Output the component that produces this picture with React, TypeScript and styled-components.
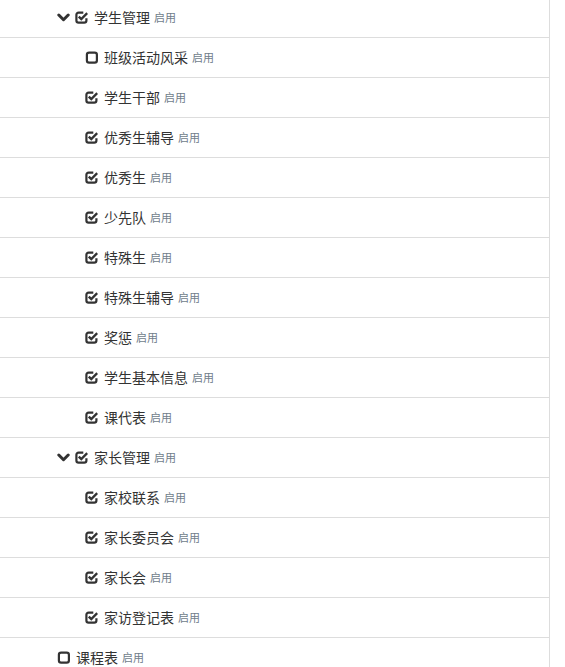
import React from "react";
import styled, { createGlobalStyle } from "styled-components";

const GlobalStyle = createGlobalStyle`
  html, body { margin: 0; padding: 0; background: #fff; }
  body { font-family: "Helvetica Neue", "Liberation Sans", "Noto Sans CJK SC", sans-serif; color: #333; }
`;

const Tree = styled.ul`
  list-style: none;
  margin: -2px 0 0 0;
  padding: 0;
  width: 550px;
  box-sizing: border-box;
  border-right: 1px solid #ddd;
`;

const Row = styled.li<{ $indent: number }>`
  display: flex;
  align-items: center;
  height: 40px;
  box-sizing: border-box;
  padding-left: ${(p) => p.$indent}px;
  border-bottom: 1px solid #ddd;
`;

const IconBox = styled.span<{ $gap: number }>`
  display: inline-flex;
  width: 13px;
  height: 13px;
  margin-right: ${(p) => p.$gap}px;
  color: #333;
  svg { display: block; }
`;

const Label = styled.span`
  font-family: "Noto Sans CJK SC", "Liberation Sans", sans-serif;
  font-size: 14px;
  color: #333;
  line-height: 20px;
  margin-bottom: 2px;
`;

const Status = styled.span`
  font-family: "Noto Sans CJK SC", "Liberation Sans", sans-serif;
  font-size: 11px;
  color: #6f7d8a;
  margin-left: 4px;
  line-height: 20px;
  margin-bottom: 2px;
`;

const Chevron = () => (
  <IconBox $gap={5}>
    <svg width="13" height="13" viewBox="0 0 13 13">
      <polyline points="1.8,4 6.5,8.7 11.2,4" fill="none" stroke="#333" strokeWidth="3" strokeLinecap="round" strokeLinejoin="round" />
    </svg>
  </IconBox>
);

const CheckSquare = () => (
  <IconBox $gap={6}>
    <svg width="13" height="13" viewBox="0 0 13 13">
      <path d="M8.3 1.6 H3.6 A2.2 2.2 0 0 0 1.4 3.8 V9.4 A2.2 2.2 0 0 0 3.6 11.6 H9.2 A2.2 2.2 0 0 0 11.4 9.4 V7.3" fill="none" stroke="#333" strokeWidth="2.2" />
      <polyline points="3.8,5.6 6.3,8.1 12.2,2.2" fill="none" stroke="#333" strokeWidth="2.4" strokeLinejoin="miter" />
    </svg>
  </IconBox>
);

const EmptySquare = () => (
  <IconBox $gap={6}>
    <svg width="13" height="13" viewBox="0 0 13 13">
      <rect x="1.9" y="1.6" width="10" height="10" rx="2.2" fill="none" stroke="#333" strokeWidth="2.2" />
    </svg>
  </IconBox>
);

type Item = { label: string; level: 1 | 2; checked: boolean; parent?: boolean };

const items: Item[] = [
  { label: "学生管理", level: 1, checked: true, parent: true },
  { label: "班级活动风采", level: 2, checked: false },
  { label: "学生干部", level: 2, checked: true },
  { label: "优秀生辅导", level: 2, checked: true },
  { label: "优秀生", level: 2, checked: true },
  { label: "少先队", level: 2, checked: true },
  { label: "特殊生", level: 2, checked: true },
  { label: "特殊生辅导", level: 2, checked: true },
  { label: "奖惩", level: 2, checked: true },
  { label: "学生基本信息", level: 2, checked: true },
  { label: "课代表", level: 2, checked: true },
  { label: "家长管理", level: 1, checked: true, parent: true },
  { label: "家校联系", level: 2, checked: true },
  { label: "家长委员会", level: 2, checked: true },
  { label: "家长会", level: 2, checked: true },
  { label: "家访登记表", level: 2, checked: true },
  { label: "课程表", level: 1, checked: false },
];

export default function App() {
  return (
    <>
      <GlobalStyle />
      <Tree>
        {items.map((it, i) => (
          <Row key={i} $indent={it.level === 1 ? 57 : 85}>
            {it.parent && <Chevron />}
            {it.checked ? <CheckSquare /> : <EmptySquare />}
            <Label>{it.label}</Label>
            <Status>启用</Status>
          </Row>
        ))}
      </Tree>
    </>
  );
}
